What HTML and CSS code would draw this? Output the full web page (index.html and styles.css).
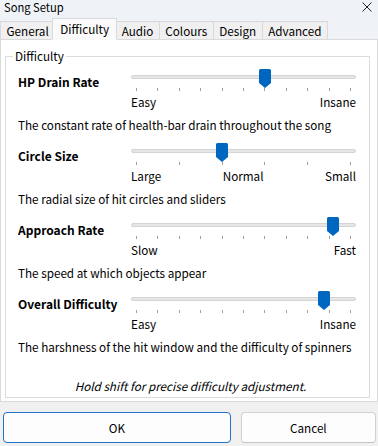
FILE: index.html
```html
<!DOCTYPE html>
<html lang="en">
<head>
    <meta charset="UTF-8">
    <title>Song Setup</title>
    <link rel="stylesheet" href="styles.css">
</head>
<body>
    <div class="titlebar">
        <span class="title">Song Setup</span>
        <svg class="close" viewBox="0 0 10 10"><path d="M0.5 0.5L9.5 9.5M9.5 0.5L0.5 9.5" stroke="#222" stroke-width="1"/></svg>
    </div>
    <div class="tabs">
        <div class="tab">General</div>
        <div class="tab active">Difficulty</div>
        <div class="tab">Audio</div>
        <div class="tab">Colours</div>
        <div class="tab">Design</div>
        <div class="tab">Advanced</div>
    </div>
    <div class="panel">
        <fieldset class="group">
            <legend>Difficulty</legend>
            <div class="settings">
                <div class="setting">
                    <div class="name">HP Drain Rate</div>
                    <div class="slider" style="--v:0.6">
                        <div class="track"></div>
                        <svg class="thumb" viewBox="0 0 12 19"><path d="M1.5 0H10.5A1.5 1.5 0 0 1 12 1.5V14L6 19L0 14V1.5A1.5 1.5 0 0 1 1.5 0Z"/></svg>
                        <div class="ticks"><i></i><i></i><i></i><i></i><i></i><i></i><i></i><i></i><i></i><i></i><i></i></div>
                        <div class="marks"><span>Easy</span><span>Insane</span></div>
                    </div>
                    <p class="desc">The constant rate of health-bar drain throughout the song</p>
                </div>
                <div class="setting">
                    <div class="name">Circle Size</div>
                    <div class="slider" style="--v:0.4">
                        <div class="track"></div>
                        <svg class="thumb" viewBox="0 0 12 19"><path d="M1.5 0H10.5A1.5 1.5 0 0 1 12 1.5V14L6 19L0 14V1.5A1.5 1.5 0 0 1 1.5 0Z"/></svg>
                        <div class="ticks"><i></i><i></i><i></i><i></i><i></i><i></i></div>
                        <div class="marks"><span>Large</span><span>Normal</span><span>Small</span></div>
                    </div>
                    <p class="desc">The radial size of hit circles and sliders</p>
                </div>
                <div class="setting">
                    <div class="name">Approach Rate</div>
                    <div class="slider" style="--v:0.92">
                        <div class="track"></div>
                        <svg class="thumb" viewBox="0 0 12 19"><path d="M1.5 0H10.5A1.5 1.5 0 0 1 12 1.5V14L6 19L0 14V1.5A1.5 1.5 0 0 1 1.5 0Z"/></svg>
                        <div class="ticks"><i></i><i></i><i></i><i></i><i></i><i></i><i></i><i></i><i></i><i></i><i></i></div>
                        <div class="marks"><span>Slow</span><span>Fast</span></div>
                    </div>
                    <p class="desc">The speed at which objects appear</p>
                </div>
                <div class="setting">
                    <div class="name">Overall Difficulty</div>
                    <div class="slider" style="--v:0.876">
                        <div class="track"></div>
                        <svg class="thumb" viewBox="0 0 12 19"><path d="M1.5 0H10.5A1.5 1.5 0 0 1 12 1.5V14L6 19L0 14V1.5A1.5 1.5 0 0 1 1.5 0Z"/></svg>
                        <div class="ticks"><i></i><i></i><i></i><i></i><i></i><i></i><i></i><i></i><i></i><i></i><i></i></div>
                        <div class="marks"><span>Easy</span><span>Insane</span></div>
                    </div>
                    <p class="desc">The harshness of the hit window and the difficulty of spinners</p>
                </div>
            </div>
            <p class="hint">Hold shift for precise difficulty adjustment.</p>
        </fieldset>
    </div>
    <div class="buttons">
        <button class="btn default">OK</button>
        <button class="btn cancel">Cancel</button>
    </div>
</body>
</html>
```
FILE: styles.css
```css
*{
    margin: 0;
    padding: 0;
    box-sizing: border-box;
    font-family: "Noto Sans CJK KR", "Noto Sans", sans-serif;
}
html,body{
    width: 378px;
    height: 446px;
    overflow: hidden;
}
body{
    background-color: #f0f0f0;
    font-size: 11.7px;
    color: #000;
}
.titlebar{
    height: 18px;
    background-color: #eff3f8;
    display: flex;
    justify-content: space-between;
    align-items: flex-start;
    padding: 0 6px 0 4px;
}
.title{
    font-size: 11.2px;
    line-height: 15px;
}
.close{
    width: 10px;
    height: 10px;
    margin-top: 2px;
}
.tabs{
    height: 22px;
    display: flex;
    align-items: flex-end;
    background-color: #eff3f8;
    box-shadow: inset 0 -1px #dadada;
}
.tab{
    height: 19px;
    line-height: 17px;
    padding: 0 5.5px;
    border: 1px solid #d9d9d9;
    margin-right: -1px;
    background-color: #f0f0f0;
}
.tab.active{
    position: relative;
    z-index: 1;
    height: 22px;
    line-height: 19px;
    margin: 0 -1px 0 -2px;
    padding: 0 7px;
    background-color: #fafafa;
    border-bottom-color: #fafafa;
}
.tab.active + .tab{
    margin-left: -1px;
}
.panel{
    background-color: #fff;
    border: 1px solid #dadada;
    border-top: none;
    padding: 9px 0 3px 4px;
}
.group{
    width: 365px;
    border: 1px solid #dcdcdc;
    padding: 0 0 4px;
}
.group legend{
    margin-left: 7px;
    padding: 0 2px;
    line-height: 14px;
}
.settings{
    padding-top: 6px;
}
.setting{
    height: 74px;
    display: grid;
    grid-template-columns: 113px 225px;
    grid-template-rows: 40px auto;
    padding-left: 12px;
}
.name{
    font-weight: bold;
    font-size: 12px;
    line-height: 16px;
    padding-top: 5px;
}
.slider{
    position: relative;
}
.track{
    margin-top: 6px;
    height: 4px;
    border: 1px solid #d4d4d4;
    background-color: #e6e6e6;
    border-radius: 2px;
}
.thumb{
    position: absolute;
    top: 0;
    left: calc(var(--v) * 214px - 0.7px);
    width: 12px;
    height: 19px;
    fill: #0067c0;
}
.ticks{
    display: flex;
    justify-content: space-between;
    padding: 0 5px;
    margin-top: 9px;
    height: 3px;
}
.ticks i{
    width: 1px;
    height: 3px;
    background-color: #a0a0a0;
}
.marks{
    display: flex;
    justify-content: space-between;
    margin-top: 4px;
    line-height: 14px;
}
.desc{
    grid-column: 1 / 3;
    margin-top: 8px;
    line-height: 15px;
}
.hint{
    margin-top: 13px;
    line-height: 15px;
    text-align: center;
    font-style: italic;
    padding-left: 6px;
}
.buttons{
    display: flex;
    gap: 10px;
    padding: 10px 2px 0 3px;
}
.btn{
    height: 31px;
    border: 1px solid #d1d1d1;
    border-bottom-color: #c4c4c4;
    border-radius: 4px;
    background-color: #fdfdfd;
    font-size: 11.7px;
    color: #000;
}
.btn.default{
    width: 229px;
    border-color: #1f72c6;
}
.btn.cancel{
    width: 136px;
}
```
